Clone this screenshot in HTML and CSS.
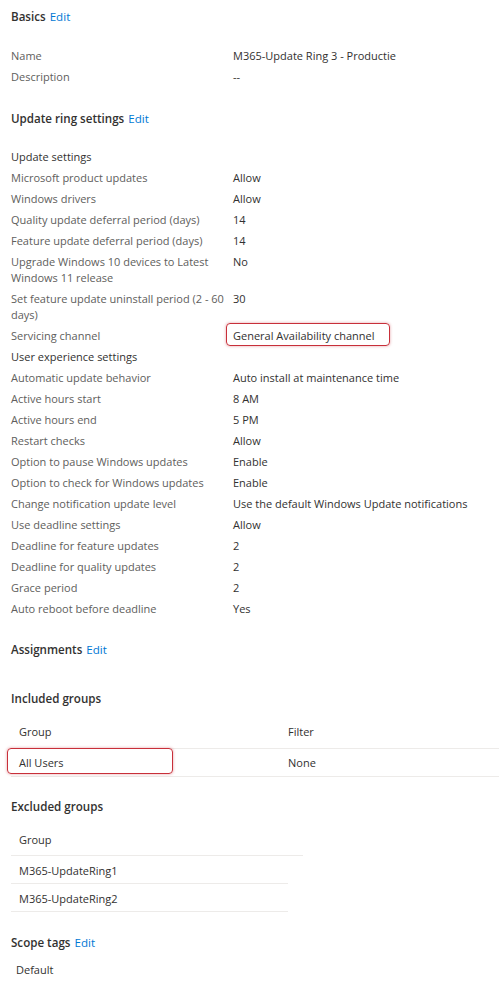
FILE: index.html
```html
<!DOCTYPE html>
<html>
<head>
<meta charset="utf-8">
<link rel="stylesheet" href="styles.css">
</head>
<body>
<div class="page">
  <div class="sec-head first">Basics <a class="edit">Edit</a></div>
  <div class="props">
    <div class="lbl">Name</div><div class="val">M365-Update Ring 3 - Productie</div>
    <div class="lbl">Description</div><div class="val">--</div>
  </div>

  <div class="sec-head ring">Update ring settings <a class="edit">Edit</a></div>
  <div class="props">
    <div class="sub">Update settings</div>
    <div class="lbl">Microsoft product updates</div><div class="val">Allow</div>
    <div class="lbl">Windows drivers</div><div class="val">Allow</div>
    <div class="lbl">Quality update deferral period (days)</div><div class="val">14</div>
    <div class="lbl">Feature update deferral period (days)</div><div class="val">14</div>
    <div class="lbl">Upgrade Windows 10 devices to Latest Windows 11 release</div><div class="val">No</div>
    <div class="lbl">Set feature update uninstall period (2 - 60 days)</div><div class="val">30</div>
    <div class="lbl">Servicing channel</div><div class="val"><span class="hl-wrap">General Availability channel<span class="hl hl-channel"></span></span></div>
    <div class="sub">User experience settings</div>
    <div class="lbl">Automatic update behavior</div><div class="val">Auto install at maintenance time</div>
    <div class="lbl">Active hours start</div><div class="val">8 AM</div>
    <div class="lbl">Active hours end</div><div class="val">5 PM</div>
    <div class="lbl">Restart checks</div><div class="val">Allow</div>
    <div class="lbl">Option to pause Windows updates</div><div class="val">Enable</div>
    <div class="lbl">Option to check for Windows updates</div><div class="val">Enable</div>
    <div class="lbl">Change notification update level</div><div class="val">Use the default Windows Update notifications</div>
    <div class="lbl">Use deadline settings</div><div class="val">Allow</div>
    <div class="lbl">Deadline for feature updates</div><div class="val">2</div>
    <div class="lbl">Deadline for quality updates</div><div class="val">2</div>
    <div class="lbl">Grace period</div><div class="val">2</div>
    <div class="lbl">Auto reboot before deadline</div><div class="val">Yes</div>
  </div>

  <div class="sec-head assign">Assignments <a class="edit">Edit</a></div>

  <div class="grp-title">Included groups</div>
  <div class="tbl incl">
    <div class="tr th"><div class="c1">Group</div><div class="c2">Filter</div></div>
    <div class="tr"><div class="c1 hl-cell">All Users<span class="hl hl-users"></span></div><div class="c2">None</div></div>
  </div>

  <div class="grp-title excl-title">Excluded groups</div>
  <div class="tbl excl">
    <div class="tr th"><div class="c1">Group</div></div>
    <div class="tr"><div class="c1">M365-UpdateRing1</div></div>
    <div class="tr"><div class="c1">M365-UpdateRing2</div></div>
  </div>

  <div class="sec-head scope">Scope tags <a class="edit">Edit</a></div>
  <div class="scope-val">Default</div>
</div>
</body>
</html>
```

FILE: styles.css
```css
* { box-sizing: border-box; }
html, body { margin: 0; padding: 0; background: #fff; }
body {
  font-family: "Open Sans", "Noto Sans", sans-serif;
  font-size: 11px;
  color: #323130;
  overflow: hidden;
}
.page { padding: 0 0 0 11px; }

.sec-head {
  font-size: 11.6px;
  font-weight: 600;
  color: #323130;
  line-height: 16px;
  margin-top: 24px;
  margin-bottom: 20px;
}
.sec-head.first { margin-top: 9px; }
.sec-head.ring { margin-bottom: 19px; }
.edit { color: #0078d4; font-weight: 400; margin-left: 1px; }

.props {
  display: grid;
  grid-template-columns: 222px 1fr;
  line-height: 16px;
}
.lbl, .val, .sub { padding: 3px 0 2px; }
.lbl { color: #605e5c; padding-right: 8px; }
.val { color: #323130; }
.sub { grid-column: 1 / 3; color: #323130; }

.hl-wrap { position: relative; }
.hl {
  position: absolute;
  border: 1.5px solid #c8303a;
  border-radius: 4px;
  box-shadow: 0 0 3px rgba(200, 40, 50, 0.45);
  pointer-events: none;
}
.hl-channel { left: -7px; right: -15px; top: -5px; bottom: -3px; }

.sec-head.assign { margin-top: 23px; margin-bottom: 0; }

.grp-title {
  font-size: 11.6px;
  font-weight: 600;
  line-height: 16px;
  margin-top: 33px;
  margin-bottom: 0;
}
.excl-title { margin-top: 22px; }

.tbl { line-height: 16px; }
.tr { display: flex; border-bottom: 1px solid #edebe9; }
.c1, .c2 { padding: 0 8px; }
.c1 { width: 269px; position: relative; }
.c2 { flex: 1; }

.incl { margin-top: 11px; }
.incl .th { height: 31px; padding-top: 6px; }
.incl .tr:not(.th) { height: 28px; padding-top: 6px; }
.hl-users { left: -4px; right: 107px; top: -7px; bottom: 2px; }

.excl { margin-top: 10px; }
.excl .th { width: 292px; height: 31px; padding-top: 7px; }
.excl .tr:not(.th) { width: 277px; height: 28px; padding-top: 7px; }

.sec-head.scope { margin-top: 23px; margin-bottom: 0; }
.scope-val { padding-left: 5px; margin-top: 11px; line-height: 16px; }
```
